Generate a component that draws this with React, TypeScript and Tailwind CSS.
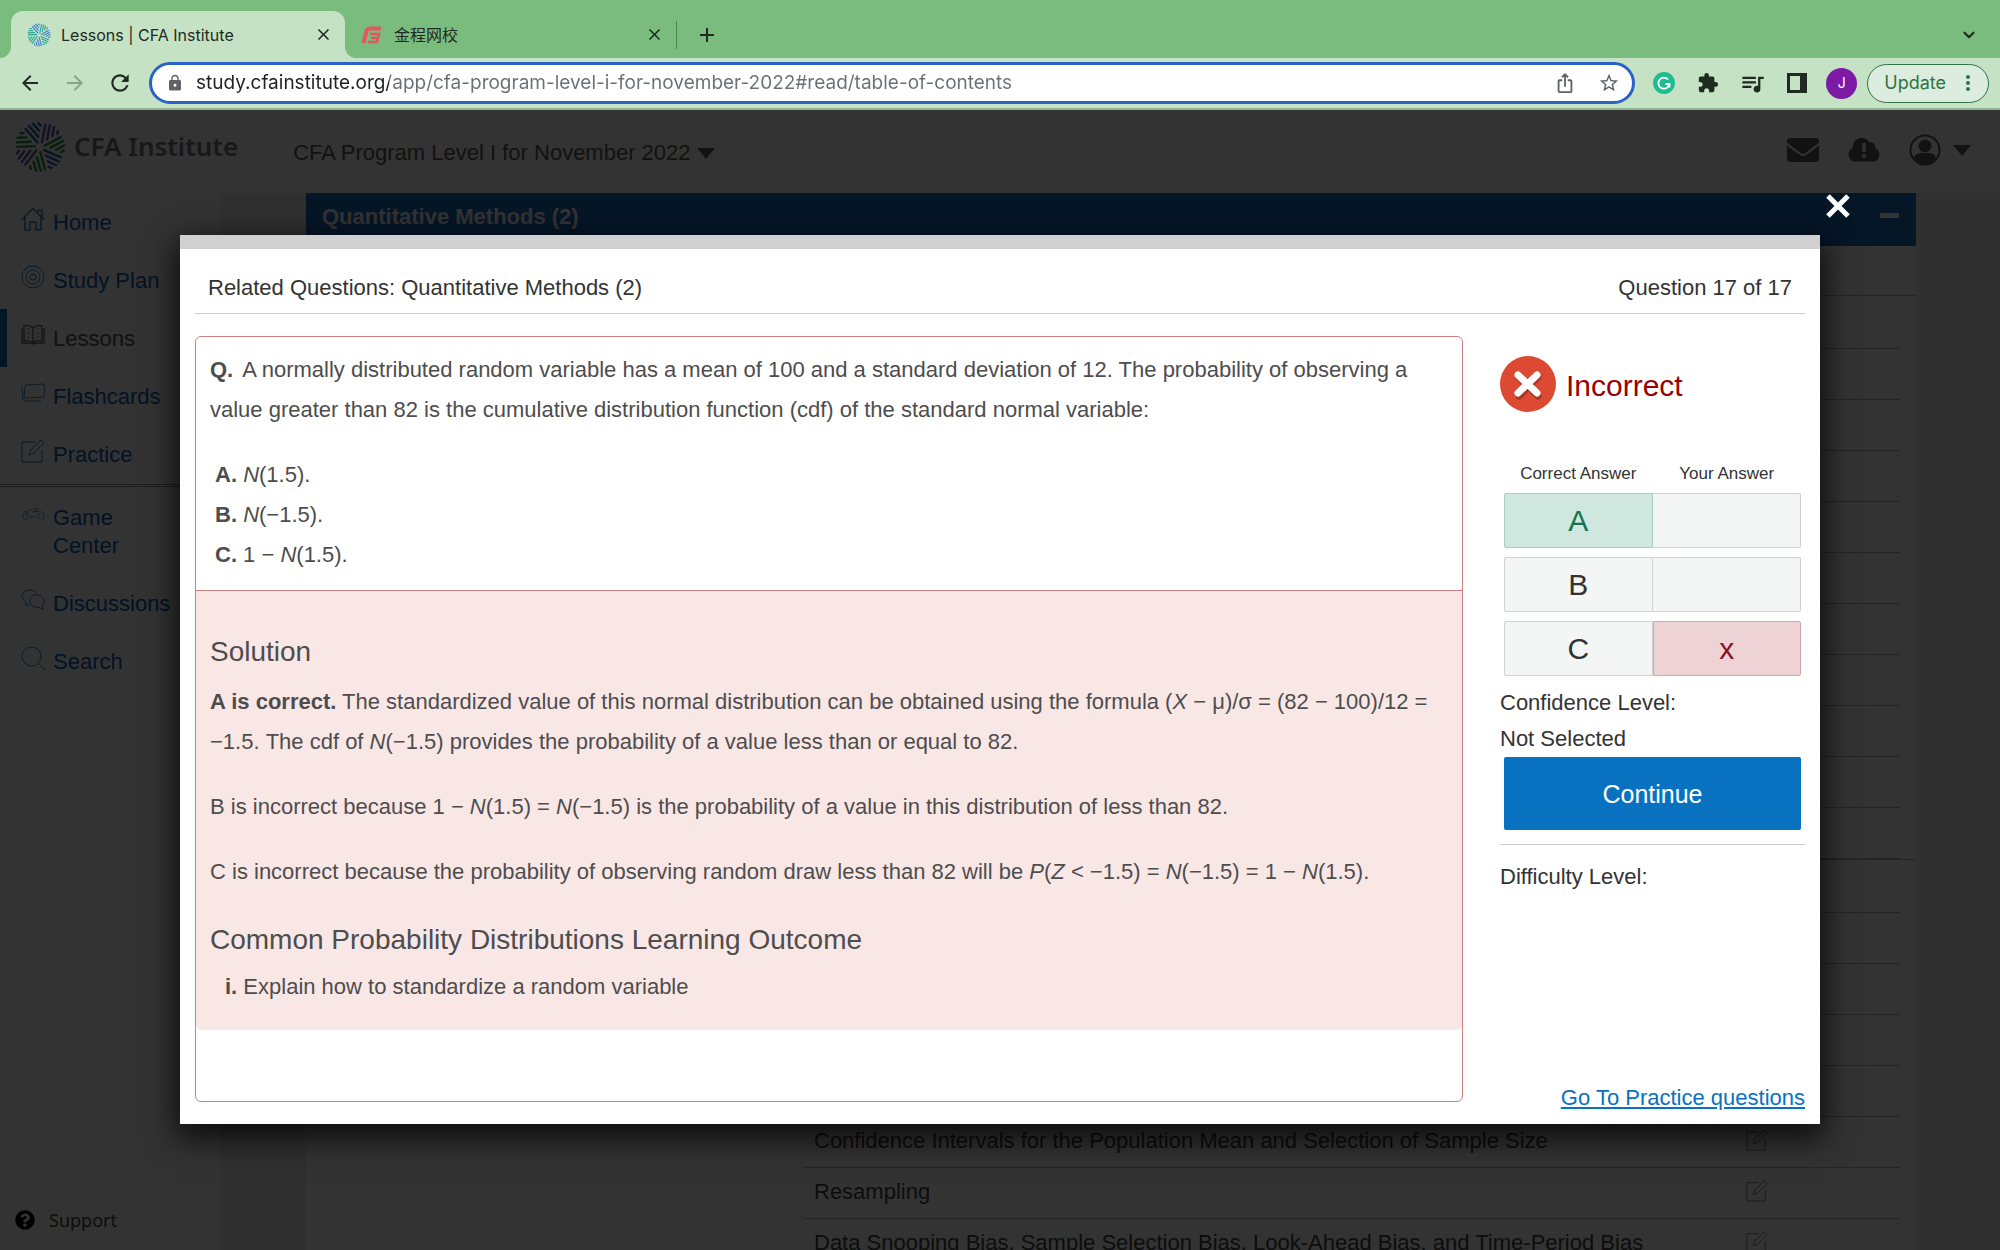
import { useState, type ReactNode } from "react";
import {
  MdAdd,
  MdArrowBack,
  MdArrowForward,
  MdClose,
  MdExtension,
  MdIosShare,
  MdLock,
  MdMoreVert,
  MdQueueMusic,
  MdRefresh,
  MdStarBorder,
} from "react-icons/md";
import { FaEnvelope, FaQuestionCircle } from "react-icons/fa";
import { ChevronDown } from "lucide-react";

const PETALS = [
  { angle: 178, color: "#1f9a4b" },
  { angle: 229, color: "#2a63b8" },
  { angle: 281, color: "#5b55b5" },
  { angle: 332, color: "#1f9a4b" },
  { angle: 24, color: "#2a63b8" },
  { angle: 75, color: "#1f9a4b" },
  { angle: 127, color: "#5b55b5" },
];

// petal stripes: [offset from the leading edge, start, end]
const STRIPES = [
  [1, 4, 24],
  [5.5, 8, 24],
  [10, 12, 23],
  [14.5, 15, 20],
];

function BurstLogo({ className, bright }: { className: string; bright?: boolean }) {
  return (
    <svg viewBox="-26 -26 52 52" className={className} aria-hidden="true">
      {PETALS.map((p, i) => (
        <g
          key={p.angle}
          transform={`rotate(${p.angle})`}
          stroke={bright ? (i % 2 ? "#3f7fd0" : "#2aa596") : p.color}
          strokeWidth={2.4}
        >
          {STRIPES.map(([d, from, to]) => (
            <line key={d} x1={from} y1={d} x2={to} y2={d} />
          ))}
        </g>
      ))}
    </svg>
  );
}

function LineIcon({ children, className = "size-6" }: { children: ReactNode; className?: string }) {
  return (
    <svg
      viewBox="0 0 24 24"
      className={className}
      fill="none"
      stroke="currentColor"
      strokeWidth={1}
      strokeLinejoin="round"
      aria-hidden="true"
    >
      {children}
    </svg>
  );
}

function EditIcon({ className }: { className?: string }) {
  return (
    <LineIcon className={className}>
      <path d="M14 3H1v20h20V11" />
      <path d="M8 16l1.500-5L20 1l3 3-10.500 10.500z" />
    </LineIcon>
  );
}

const ICONS: Record<string, ReactNode> = {
  home: (
    <LineIcon>
      <path strokeWidth={1.5} d="M1 12.500L12 1.500l11 11M4 10v13h5v-8h6v8h5V10M17 6V3h4v7" />
    </LineIcon>
  ),
  plan: (
    <LineIcon>
      <circle cx="12" cy="12" r="11" />
      <circle cx="12" cy="12" r="7" />
      <circle cx="12" cy="12" r="3" />
    </LineIcon>
  ),
  lessons: (
    <LineIcon>
      <path strokeWidth={1.5} d="M12 5C9 2 5 2 3 3v15c3-1 6-1 9 2 3-3 6-3 9-2V3c-2-1-6-1-9 2zM12 5v15M3 6H1v14h9l2 1 2-1h9V6h-2" />
      <path d="M6 6c1 0 2 0 3 1M6 10c1 0 2 0 3 1M6 14c1 0 2 0 3 1M18 6c-1 0-2 0-3 1M18 10c-1 0-2 0-3 1M18 14c-1 0-2 0-3 1" />
    </LineIcon>
  ),
  cards: (
    <LineIcon>
      <path d="M5 4l17-1c1 0 1 1 1 1l1 11c0 1-1 1-1 1L5 17c-1 0-2 0-2-1L4 5c0-1 1-1 1-1zM2 6c-1 0-1 1-1 2l1 10c0 1 1 2 2 2h16" />
    </LineIcon>
  ),
  practice: <EditIcon />,
  game: (
    <LineIcon>
      <path strokeDasharray="2 1" d="M2 13c0-3 3-4 5-4l9-3 1 2-5 2 8-1c3 1 4 8 2 9s-4-3-6-3H9c-2 0-3 3-5 2s-2-3-2-4zM6 10v4M4 12h4M17 12h3" />
    </LineIcon>
  ),
  chat: (
    <LineIcon>
      <path d="M8 17l-3 1v-4C1 12 0 7 3 4c3-3 10-3 13 1" />
      <path d="M21 18l1 4-4-3c-5 1-9-1-9-6s4-7 8-6c6 1 8 8 4 11z" />
    </LineIcon>
  ),
  search: (
    <LineIcon>
      <circle cx="10.500" cy="10.500" r="9.500" />
      <path d="M17.500 17.500L24 24" />
    </LineIcon>
  ),
};

const NAV_MAIN = [
  { label: "Home", icon: "home" },
  { label: "Study Plan", icon: "plan" },
  { label: "Lessons", icon: "lessons", active: true },
  { label: "Flashcards", icon: "cards" },
  { label: "Practice", icon: "practice" },
];

const NAV_MORE = [
  { label: "Game Center", icon: "game" },
  { label: "Discussions", icon: "chat" },
  { label: "Search", icon: "search" },
];

const SECTIONS: string[][] = [
  Array(11).fill(""),
  [
    "",
    "",
    "",
    "",
    "",
    "Confidence Intervals for the Population Mean and Selection of Sample Size",
    "Resampling",
    "Data Snooping Bias, Sample Selection Bias, Look-Ahead Bias, and Time-Period Bias",
  ],
];

const ANSWERS = [
  { letter: "A", correct: true, chosen: false },
  { letter: "B", correct: false, chosen: false },
  { letter: "C", correct: false, chosen: true },
];

function TabStrip() {
  return (
    <div className="flex h-[58px] items-end bg-[#7abb7e] pl-[11px] font-['Inter','Noto_Sans_CJK_SC',sans-serif] text-base text-[#1f2a20]">
      <div className="relative flex h-[47px] w-[334px] items-center rounded-t-xl bg-[#c5e2c5] pr-3 pl-4">
        <svg viewBox="0 0 11 11" className="absolute bottom-0 -left-[11px] size-[11px]" aria-hidden="true">
          <path d="M11 0v11H0c6 0 11-5 11-11z" fill="#c5e2c5" />
        </svg>
        <svg viewBox="0 0 11 11" className="absolute -right-[11px] bottom-0 size-[11px]" aria-hidden="true">
          <path d="M0 0v11h11C5 11 0 6 0 0z" fill="#c5e2c5" />
        </svg>
        <BurstLogo bright className="size-6" />
        <span className="ml-2.5 flex-1">Lessons | CFA Institute</span>
        <button type="button" aria-label="Close Lessons tab">
          <MdClose className="size-[19px]" />
        </button>
      </div>
      <div className="flex h-[47px] w-[331px] items-center pr-3 pl-4">
        <svg viewBox="0 0 21 18" className="h-[18px] w-[21px]" fill="none" stroke="#e0595c" strokeWidth="4" aria-hidden="true">
          <path d="M20 2.500H9C7 2.500 6 3.500 5.500 5L2.500 17" />
          <path d="M9 8h9l-1 4-1 4H7M10 12h7" strokeWidth="2.600" />
        </svg>
        <span className="ml-3 flex-1">金程网校</span>
        <button type="button" aria-label="Close 金程网校 tab">
          <MdClose className="size-[19px]" />
        </button>
      </div>
      <div className="flex h-[47px] items-center">
        <span className="h-7 w-px bg-[#4e8353]" />
        <button type="button" aria-label="New tab" className="ml-[18px]">
          <MdAdd className="size-6" />
        </button>
      </div>
      <button type="button" aria-label="Search tabs" className="mr-[22px] mb-3.5 ml-auto">
        <ChevronDown className="size-[18px]" strokeWidth={3} />
      </button>
    </div>
  );
}

function Toolbar() {
  const [url, setUrl] = useState(
    "study.cfainstitute.org/app/cfa-program-level-i-for-november-2022#read/table-of-contents",
  );

  return (
    <div className="flex h-[52px] items-center border-b-2 border-[#8fb592] bg-[#c5e2c5] pr-[11px] pl-[18px] font-['Inter',sans-serif] text-[#1f2a20]">
      <button type="button" aria-label="Back">
        <MdArrowBack className="size-6" />
      </button>
      <button type="button" aria-label="Forward" className="ml-[21px] text-[#86a688]">
        <MdArrowForward className="size-6" />
      </button>
      <button type="button" aria-label="Reload" className="ml-5">
        <MdRefresh className="size-[26px]" />
      </button>
      <div className="ml-4 flex h-[42px] flex-1 items-center rounded-full border-3 border-[#2a62c9] bg-white pr-3 pl-3.5 text-[#5f6368]">
        <MdLock className="size-[18px]" />
        <input
          aria-label="Address"
          value={url}
          onChange={(e) => setUrl(e.target.value)}
          className="ml-3 min-w-0 flex-1 bg-[linear-gradient(90deg,#202124_193px,#6b6f73_193px)] bg-clip-text text-[19px] text-transparent outline-none"
        />
        <button type="button" aria-label="Share">
          <MdIosShare className="size-[22px]" />
        </button>
        <button type="button" aria-label="Bookmark" className="ml-[22px]">
          <MdStarBorder className="size-[22px]" />
        </button>
      </div>
      <svg viewBox="0 0 22 22" className="ml-[18px] size-[22px]" aria-hidden="true">
        <circle cx="11" cy="11" r="11" fill="#1dbd90" />
        <path d="M15 7.500A5.500 5.500 0 1 0 16.300 12H12.500M16.500 11.500v4" fill="none" stroke="#fff" strokeWidth="1.800" />
      </svg>
      <MdExtension className="ml-[22px] size-[22px]" />
      <MdQueueMusic className="ml-5 size-[27px]" />
      <svg viewBox="0 0 20 20" className="ml-[21px] size-5" aria-hidden="true">
        <path d="M1.500 1.500h17v17h-17z" fill="none" stroke="currentColor" strokeWidth="3" />
        <path d="M13 0h7v20h-7z" fill="currentColor" />
      </svg>
      <button
        type="button"
        className="ml-[19px] size-[31px] rounded-full bg-[#7d1aa5] text-sm text-white"
      >
        J
      </button>
      <button
        type="button"
        className="ml-2.5 flex h-[39px] items-center rounded-full border border-[#2f7444] bg-[#dcecde] pr-2 pl-4 text-lg text-[#2f7444]"
      >
        Update
        <MdMoreVert className="ml-2.5 size-6" />
      </button>
    </div>
  );
}

function SiteHeader() {
  return (
    <header className="flex h-[83px] items-start bg-white text-[22px] text-[#5a5a5a]">
      <BurstLogo className="mt-[11px] ml-3.5 size-[52px]" />
      <span className="mt-4 ml-2 font-['Noto_Sans',sans-serif] text-[26px] leading-10 font-semibold text-[#777]">
        CFA Institute
      </span>
      <button type="button" className="mt-[25px] ml-[55px] flex items-center gap-1.5 leading-9">
        CFA Program Level I for November 2022
        <svg viewBox="0 0 18 11" className="h-[11px] w-[18px]" aria-hidden="true">
          <path d="M0 0h18L9 11z" fill="currentColor" />
        </svg>
      </button>
      <div className="mt-6 mr-[29px] ml-auto flex items-center">
        <button type="button" aria-label="Messages">
          <FaEnvelope className="size-8" />
        </button>
        <button type="button" aria-label="Alerts" className="ml-[29px]">
          <svg viewBox="0 0 32 26" className="h-[26px] w-8" fill="currentColor" aria-hidden="true">
            <path d="M7 24.500a7 7 0 0 1-2-13.500C4 5 9 1 14 1c4 0 6 2 7.500 4.500C25 4.500 28 7 27 11c6 2 6 12-1 13.500z" />
            <path d="M14 6h4v9h-4zM14 17h4v4h-4z" fill="#ddd" />
          </svg>
        </button>
        <button type="button" aria-label="Account" className="ml-[29px] flex items-center gap-3">
          <svg viewBox="0 0 32 32" className="size-8" fill="currentColor" aria-hidden="true">
            <circle cx="16" cy="16" r="14.500" fill="none" stroke="currentColor" strokeWidth="2" />
            <circle cx="16" cy="12" r="6.500" />
            <path d="M5 24c2-6 6-5 11-5s9-1 11 5c-3 4-7 6-11 6s-8-2-11-6z" />
          </svg>
          <svg viewBox="0 0 18 11" className="h-[11px] w-[18px]" aria-hidden="true">
            <path d="M0 0h18L9 11z" fill="currentColor" />
          </svg>
        </button>
      </div>
    </header>
  );
}

function NavItem({ label, icon, active }: { label: string; icon: string; active?: boolean }) {
  return (
    <a
      href="#"
      className={
        active
          ? "flex gap-2 border-l-[7px] border-[#0772be] py-3.5 pr-20 pl-3.5 text-[#555]"
          : "flex gap-2 border-l-[7px] border-transparent py-3.5 pr-20 pl-3.5 text-[#0a62b0]"
      }
    >
      <span className="shrink-0 opacity-80">{ICONS[icon]}</span>
      <span className={label.includes("Center") ? "pt-0.5" : "pt-0.5 whitespace-nowrap"}>{label}</span>
    </a>
  );
}

function Sidebar() {
  return (
    <nav className="flex w-[220px] shrink-0 flex-col text-[22px] leading-7">
      {NAV_MAIN.map((item) => (
        <NavItem key={item.label} {...item} />
      ))}
      <hr className="my-px h-[3px] border-y border-[#999]" />
      {NAV_MORE.map((item) => (
        <NavItem key={item.label} {...item} />
      ))}
      <a
        href="#"
        className="mt-auto mb-3.5 flex items-center gap-3.5 pl-[15px] font-['Noto_Sans',sans-serif] text-lg leading-8 text-[#444]"
      >
        <FaQuestionCircle className="size-5 text-black" />
        Support
      </a>
    </nav>
  );
}

function LessonList() {
  return (
    <main className="mr-[84px] min-w-0 flex-1 overflow-hidden bg-white text-[22px] text-[#444]">
      <div className="flex h-[53px] items-start justify-between bg-[#1a6fc3] pr-[17px] pl-4">
        <h1 className="pt-1.5 leading-9 font-bold text-white">Quantitative Methods (2)</h1>
        <button type="button" aria-label="Collapse" className="mt-5 h-[5px] w-[19px] bg-white" />
      </div>
      <div className="h-[49px]" />
      {SECTIONS.map((rows, i) => (
        <section key={i} className="border-t border-[#bbb] pt-0.5">
          <ul className="mr-4 ml-[497px]">
            {rows.map((title, j) => (
              <li
                key={j}
                className="flex h-[51px] items-center justify-between border-b border-[#bbb] pr-[132px] pb-1 pl-[11px]"
              >
                <span className="whitespace-nowrap">{title}</span>
                <EditIcon className="size-[22px] shrink-0 text-[#777]" />
              </li>
            ))}
          </ul>
        </section>
      ))}
    </main>
  );
}

function QuestionPanel() {
  return (
    <section className="mb-3 flex-1 rounded-md border border-[#cb7f80] pb-[71px] leading-10 text-[#4d4d4d]">
      <div className="border-b border-[#cb7f80] px-3.5 pt-[13px] pb-[15px]">
        <p>
          <b className="mr-1">Q.</b> A normally distributed random variable has a mean of 100 and a standard deviation
          of 12. The probability of observing a value greater than 82 is the cumulative distribution function (cdf) of
          the standard normal variable:
        </p>
        <ul className="mt-[25px] pl-[5px]">
          <li>
            <b>A.</b> <i>N</i>(1.5).
          </li>
          <li>
            <b>B.</b> <i>N</i>(−1.5).
          </li>
          <li>
            <b>C.</b> 1 − <i>N</i>(1.5).
          </li>
        </ul>
      </div>
      <div className="rounded-b-md bg-[#f9e7e6] px-3.5 pt-[41px] pb-[23px]">
        <h2 className="text-[28px]">Solution</h2>
        <p className="mt-2.5">
          <b>A is correct.</b> The standardized value of this normal distribution can be obtained using the formula (
          <i>X</i> − μ)/σ = (82 − 100)/12 = −1.5. The cdf of <i>N</i>(−1.5) provides the probability of a value less
          than or equal to 82.
        </p>
        <p className="mt-[25px]">
          B is incorrect because 1 − <i>N</i>(1.5) = <i>N</i>(−1.5) is the probability of a value in this distribution
          of less than 82.
        </p>
        <p className="mt-[25px]">
          C is incorrect because the probability of observing random draw less than 82 will be <i>P</i>(<i>Z</i> &lt;
          −1.5) = <i>N</i>(−1.5) = 1 − <i>N</i>(1.5).
        </p>
        <h2 className="mt-7 text-[28px]">Common Probability Distributions Learning Outcome</h2>
        <p className="mt-[7px] pl-[15px]">
          <b>i.</b> Explain how to standardize a random variable
        </p>
      </div>
    </section>
  );
}

function ResultPanel() {
  return (
    <aside className="flex w-[305px] shrink-0 flex-col pt-5 leading-9 text-[#333]">
      <div className="flex items-center gap-2.5">
        <svg viewBox="0 0 56 56" className="size-14" aria-hidden="true">
          <circle cx="28" cy="28" r="28" fill="#dc4a33" />
          <path d="M19 21l19 19M38 21L19 40" stroke="#a53524" strokeWidth="7" strokeLinecap="round" />
          <path d="M18 19l19 18M37 19L18 37" stroke="#fff" strokeWidth="7" strokeLinecap="round" />
        </svg>
        <span className="pt-1 text-[30px] text-[#9b0000]">Incorrect</span>
      </div>
      <table className="mx-1 mt-[43px] w-[calc(100%-8px)] table-fixed border-separate border-spacing-x-0 border-spacing-y-[9px]">
        <thead>
          <tr className="text-[17px] leading-5">
            <th className="p-0 font-normal">Correct Answer</th>
            <th className="p-0 font-normal">Your Answer</th>
          </tr>
        </thead>
        <tbody className="text-center">
          {ANSWERS.map((a) => (
            <tr key={a.letter} className="h-[55px]">
              <td
                className={
                  a.correct
                    ? "rounded-l-xs border border-[#a3d0c0] bg-[#cfe7df] p-0 text-[30px] text-[#17724e]"
                    : "rounded-l-xs border border-[#cfd3d3] bg-[#f4f6f6] p-0 text-[30px]"
                }
              >
                {a.letter}
              </td>
              <td
                className={
                  a.chosen
                    ? "rounded-r-xs border border-[#d9a3a8] bg-[#edd3d5] p-0 text-[30px] text-[#8a1226]"
                    : "rounded-r-xs border border-l-0 border-[#cfd3d3] bg-[#f4f6f6] p-0"
                }
              >
                {a.chosen ? "x" : ""}
              </td>
            </tr>
          ))}
        </tbody>
      </table>
      <p>Confidence Level:</p>
      <p>Not Selected</p>
      <button type="button" className="mx-1 h-[73px] rounded-xs bg-[#0972c0] text-[25px] text-white">
        Continue
      </button>
      <hr className="mt-3.5 border-[#ccc]" />
      <p className="mt-3.5">Difficulty Level:</p>
      <a href="#" className="mt-auto self-end pb-0.5 leading-7 text-[#0972c0] underline">
        Go To Practice questions
      </a>
    </aside>
  );
}

export default function App() {
  const [open, setOpen] = useState(true);

  return (
    <div className="flex h-screen flex-col overflow-hidden font-['Liberation_Sans',Arial,sans-serif]">
      <TabStrip />
      <Toolbar />
      <div className="relative flex min-h-0 flex-1 flex-col bg-white">
        <SiteHeader />
        <div className="flex min-h-0 flex-1">
          <Sidebar />
          <div className="flex min-w-0 flex-1 bg-[#f0f0f0] pl-[86px]">
            <LessonList />
          </div>
        </div>

        {open && (
          <div className="absolute inset-0 bg-black/80 px-[9%] pt-[125px]">
            <div
              role="dialog"
              aria-label="Related Questions"
              className="relative border-t-14 border-[#d0d0d0] bg-white px-[15px] pb-2.5 text-[22px] shadow-[0_10px_30px_4px_rgba(0,0,0,0.8)]"
            >
              <button
                type="button"
                aria-label="Close"
                onClick={() => setOpen(false)}
                className="absolute -top-[55px] -right-[30px] text-white"
              >
                <svg viewBox="0 0 24 24" className="size-6" stroke="currentColor" strokeWidth="5" aria-hidden="true">
                  <path d="M2 2l20 20M22 2L2 22" />
                </svg>
              </button>
              <div className="mb-[22px] flex h-[65px] items-center justify-between border-b border-[#ccc] px-[13px] pt-3 text-[#333]">
                <span>Related Questions: Quantitative Methods (2)</span>
                <span>Question 17 of 17</span>
              </div>
              <div className="flex gap-[37px]">
                <QuestionPanel />
                <ResultPanel />
              </div>
            </div>
          </div>
        )}
      </div>
    </div>
  );
}
